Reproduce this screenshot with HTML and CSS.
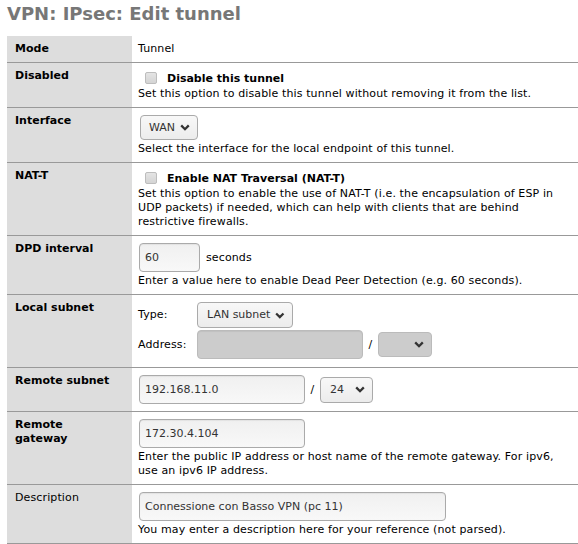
FILE: index.html
```html
<!DOCTYPE html>
<html>
<head>
<meta charset="utf-8">
<link rel="stylesheet" href="styles.css">
</head>
<body>
<div class="page">
  <h1 class="title">VPN: IPsec: Edit tunnel</h1>
  <table class="form">
    <tr>
      <td class="lbl">Mode</td>
      <td class="val">Tunnel</td>
    </tr>
    <tr>
      <td class="lbl">Disabled</td>
      <td class="val">
        <div class="check-line"><input type="checkbox" class="cb"><b>Disable this tunnel</b></div>
        <div class="desc">Set this option to disable this tunnel without removing it from the list.</div>
      </td>
    </tr>
    <tr>
      <td class="lbl">Interface</td>
      <td class="val">
        <div class="ctl-line"><span class="sel sel-wan">WAN<svg class="chev" width="10" height="7" viewBox="0 0 10 7"><path d="M1.2 1.4 L5 5.2 L8.8 1.4" /></svg></span></div>
        <div class="desc">Select the interface for the local endpoint of this tunnel.</div>
      </td>
    </tr>
    <tr>
      <td class="lbl">NAT-T</td>
      <td class="val">
        <div class="check-line"><input type="checkbox" class="cb"><b>Enable NAT Traversal (NAT-T)</b></div>
        <div class="desc">Set this option to enable the use of NAT-T (i.e. the encapsulation of ESP in UDP packets) if needed, which can help with clients that are behind restrictive firewalls.</div>
      </td>
    </tr>
    <tr>
      <td class="lbl">DPD interval</td>
      <td class="val">
        <div class="ctl-line"><input class="inp inp-dpd" type="text" value="60"><span class="unit">seconds</span></div>
        <div class="desc">Enter a value here to enable Dead Peer Detection (e.g. 60 seconds).</div>
      </td>
    </tr>
    <tr>
      <td class="lbl">Local subnet</td>
      <td class="val">
        <div class="subnet-grid">
          <span>Type:</span>
          <span><span class="sel sel-lan">LAN subnet<svg class="chev" width="10" height="7" viewBox="0 0 10 7"><path d="M1.2 1.4 L5 5.2 L8.8 1.4" /></svg></span></span>
          <span>Address:</span>
          <span class="addr"><input class="inp inp-addr" type="text" disabled><span class="slash">/</span><span class="sel sel-mask off"><svg class="chev" width="10" height="7" viewBox="0 0 10 7"><path d="M1.2 1.4 L5 5.2 L8.8 1.4" /></svg></span></span>
        </div>
      </td>
    </tr>
    <tr>
      <td class="lbl">Remote subnet</td>
      <td class="val">
        <div class="ctl-line rs"><input class="inp inp-addr" type="text" value="192.168.11.0"><span class="slash">/</span><span class="sel sel-24">24<svg class="chev" width="10" height="7" viewBox="0 0 10 7"><path d="M1.2 1.4 L5 5.2 L8.8 1.4" /></svg></span></div>
      </td>
    </tr>
    <tr>
      <td class="lbl">Remote gateway</td>
      <td class="val">
        <div class="ctl-line"><input class="inp inp-addr" type="text" value="172.30.4.104"></div>
        <div class="desc">Enter the public IP address or host name of the remote gateway. For ipv6, use an ipv6 IP address.</div>
      </td>
    </tr>
    <tr>
      <td class="lbl plain">Description</td>
      <td class="val">
        <div class="ctl-line"><input class="inp inp-desc" type="text" value="Connessione con Basso VPN (pc 11)"></div>
        <div class="desc">You may enter a description here for your reference (not parsed).</div>
      </td>
    </tr>
  </table>
</div>
</body>
</html>
```

FILE: styles.css
```css
html, body {
  margin: 0;
  padding: 0;
  background: #fff;
}

body {
  font-family: "DejaVu Sans", Verdana, sans-serif;
  font-size: 11px;
  line-height: 14px;
  letter-spacing: 0.12px;
  color: #000;
}

b {
  letter-spacing: 0;
}

.page {
  padding: 3px 0 0 7px;
}

.title {
  margin: 0 0 12px 0;
  font-size: 18px;
  line-height: 21px;
  font-weight: bold;
  letter-spacing: 0;
  color: #777;
}

.form {
  width: 100%;
  border-collapse: collapse;
}

.form td {
  vertical-align: top;
  border-bottom: 1px solid #999;
  padding: 6px 6px 6px 6px;
}

.form .lbl {
  width: 97px;
  padding: 6px 20px 6px 8px;
  background: #ddd;
  font-weight: bold;
  letter-spacing: 0;
}

.form .lbl.plain {
  font-weight: normal;
  letter-spacing: 0.12px;
}

.check-line {
  display: flex;
  align-items: flex-start;
  height: 18px;
}

.check-line b {
  margin-top: 3px;
}

.cb {
  appearance: none;
  -webkit-appearance: none;
  box-sizing: border-box;
  width: 12px;
  height: 12px;
  margin: 3px 10px 0 7px;
  border: 1px solid #bdbdbd;
  border-radius: 2px;
  background: linear-gradient(#e4e4e4, #d4d4d4);
}

.ctl-line {
  display: flex;
  align-items: center;
  margin: 1px 0 2px 1px;
}

.ctl-line.rs {
  margin: 1px 0 1px 1px;
}

.inp {
  box-sizing: border-box;
  height: 29px;
  margin: 0;
  padding: 0 5px;
  border: 1px solid #aaa;
  border-radius: 4px;
  background: linear-gradient(#f0f0f0, #f8f8f8);
  box-shadow: inset 0 1px 1px rgba(0, 0, 0, 0.06);
  font-family: "DejaVu Sans", Verdana, sans-serif;
  font-size: 11px;
  letter-spacing: 0;
  color: #333;
  outline: none;
}

.inp-dpd {
  width: 61px;
}

.inp-addr {
  width: 166px;
}

.inp[disabled] {
  background: #ccc;
  border-color: #bbb;
}

.inp-desc {
  width: 307px;
}

.unit {
  margin-left: 6px;
}

.sel {
  box-sizing: border-box;
  display: inline-flex;
  align-items: center;
  justify-content: space-between;
  height: 25px;
  padding: 0 7px 0 8px;
  border: 1px solid #aaa;
  border-radius: 4px;
  background: linear-gradient(#f8f8f8, #ececec);
  color: #333;
  letter-spacing: 0;
  white-space: nowrap;
}

.sel.off {
  background: #ccc;
  border-color: #bbb;
  justify-content: flex-end;
}

.chev {
  display: block;
  margin-left: 5px;
}

.chev path {
  fill: none;
  stroke: #333;
  stroke-width: 2.3;
  stroke-linecap: butt;
  stroke-linejoin: miter;
}

.sel-wan {
  width: 58px;
  margin-left: 1px;
}

.sel-lan {
  width: 96px;
  height: 26px;
  padding-left: 9px;
}

.sel-mask {
  width: 54px;
}

.sel-24 {
  width: 53px;
  height: 26px;
  padding-left: 9px;
}

.slash {
  width: 15px;
  text-align: center;
  color: #000;
}

.subnet-grid {
  display: grid;
  grid-template-columns: 59px auto;
  row-gap: 2px;
  align-items: center;
  margin: 1px 0 2px 0;
}

.addr {
  display: flex;
  align-items: center;
}

.desc {
  line-height: 14px;
}
```
